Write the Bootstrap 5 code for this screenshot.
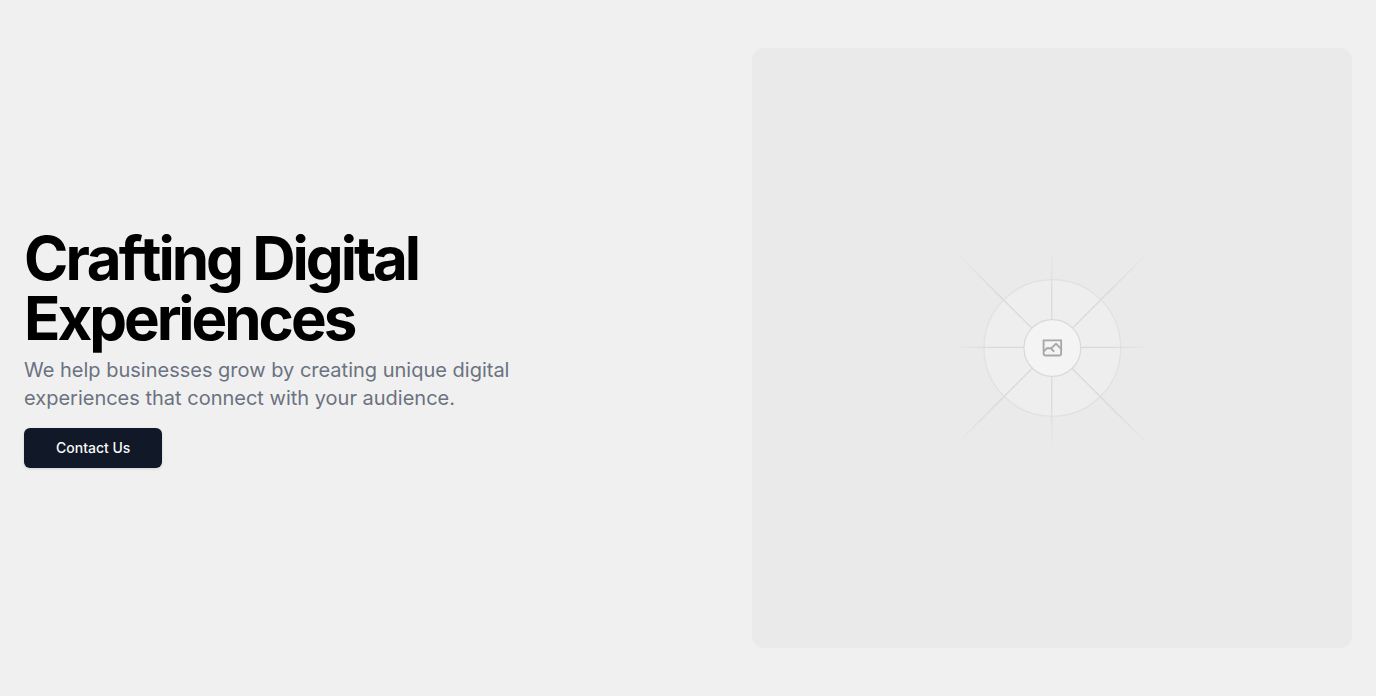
<!DOCTYPE html>
<html lang="en">
<head>
<meta charset="utf-8">
<meta name="viewport" content="width=device-width, initial-scale=1">
<title>Crafting Digital Experiences</title>
<link href="https://cdn.jsdelivr.net/npm/bootstrap@5.3.0/dist/css/bootstrap.min.css" rel="stylesheet">
<style>
  body { background: #f0f0f0; font-family: Inter, "Liberation Sans", sans-serif; }
  .hero { display: grid; gap: 48px; }
  @media (min-width: 1200px) { .hero { grid-template-columns: minmax(0, 1fr) 600px; } }
  .hero-title { font-size: 60px; line-height: 60px; letter-spacing: -0.05em; font-kerning: none; color: #000; }
  .hero-lead { max-width: 600px; font-size: 20px; line-height: 28px; color: #6b7280; }
  .btn-contact {
    --bs-btn-color: #f9fafb; --bs-btn-bg: #111827; --bs-btn-border-color: #111827;
    --bs-btn-hover-color: #f9fafb; --bs-btn-hover-bg: #1f2937; --bs-btn-hover-border-color: #1f2937;
    --bs-btn-font-size: 14px; --bs-btn-line-height: 20px; --bs-btn-font-weight: 500;
    --bs-btn-padding-x: 32px; --bs-btn-padding-y: 10px; --bs-btn-border-radius: 6px;
    --bs-btn-border-width: 0;
    box-shadow: 0 1px 3px rgba(0, 0, 0, .12);
  }
  .hero-art { border-radius: 12px; background: #eaeaea; }
</style>
</head>
<body>
<main class="container-fluid px-4 py-5">
  <section class="hero align-items-center">
    <div class="d-flex flex-column align-items-start gap-3">
      <div class="d-flex flex-column gap-2">
        <h1 class="hero-title fw-bold mb-0">Crafting Digital<br>Experiences</h1>
        <p class="hero-lead mb-0">We help businesses grow by creating unique digital experiences that connect with your audience.</p>
      </div>
      <button type="button" class="btn btn-contact">Contact Us</button>
    </div>
    <div class="hero-art ratio ratio-1x1 overflow-hidden">
      <svg viewBox="0 0 1200 1200" fill="none" role="img" aria-label="Image placeholder">
        <defs>
          <linearGradient id="fadeH" gradientUnits="userSpaceOnUse" x1="405" y1="0" x2="797" y2="0">
            <stop stop-color="#c9c9c9" stop-opacity="0"/><stop offset=".208" stop-color="#c9c9c9"/><stop offset=".792" stop-color="#c9c9c9"/><stop offset="1" stop-color="#c9c9c9" stop-opacity="0"/>
          </linearGradient>
          <linearGradient id="fadeV" gradientUnits="userSpaceOnUse" x1="0" y1="404" x2="0" y2="796">
            <stop stop-color="#c9c9c9" stop-opacity="0"/><stop offset=".208" stop-color="#c9c9c9"/><stop offset=".792" stop-color="#c9c9c9"/><stop offset="1" stop-color="#c9c9c9" stop-opacity="0"/>
          </linearGradient>
        </defs>
        <g opacity=".5">
          <g opacity=".5">
            <circle cx="600.7" cy="599.9" r="136.6" fill="#fafafa"/>
            <circle cx="600.7" cy="599.9" r="136.6" stroke="#c9c9c9" stroke-width="2.418"/>
          </g>
          <g stroke-width="2.418">
            <path stroke="url(#fadeH)" d="M404.8 796.5 796.3 405"/>
            <path stroke="url(#fadeH)" d="M795.7 796.6 404.3 405.2"/>
            <path stroke="url(#fadeH)" d="M404.8 598.7h391.8"/>
            <path stroke="url(#fadeV)" d="M599.5 795.7V404"/>
          </g>
          <circle cx="600.7" cy="599.9" r="56.8" fill="#fff"/>
          <path fill="#666" fill-rule="evenodd" d="M616.426 586.58h-31.434v16.176l3.553-3.554.531-.531h9.068l.074-.074 8.463-8.463h2.565l7.18 7.181V586.58Zm-15.715 14.654 3.698 3.699 1.283 1.282-2.565 2.565-1.282-1.283-5.2-5.199h-6.066l-5.514 5.514-.073.073v2.876a2.418 2.418 0 0 0 2.418 2.418h26.598a2.418 2.418 0 0 0 2.418-2.418v-8.317l-8.463-8.463-7.181 7.181-.071.072Zm-19.347 5.442v4.085a6.045 6.045 0 0 0 6.046 6.045h26.598a6.044 6.044 0 0 0 6.045-6.045v-7.108l1.356-1.355-1.282-1.283-.074-.073v-17.989h-38.689v23.43l-.146.146.146.147Z"/>
          <circle cx="600.7" cy="599.9" r="56.8" stroke="#c9c9c9" stroke-width="2.418"/>
        </g>
      </svg>
    </div>
  </section>
</main>
<script src="https://cdn.jsdelivr.net/npm/bootstrap@5.3.0/dist/js/bootstrap.bundle.min.js"></script>
</body>
</html>
